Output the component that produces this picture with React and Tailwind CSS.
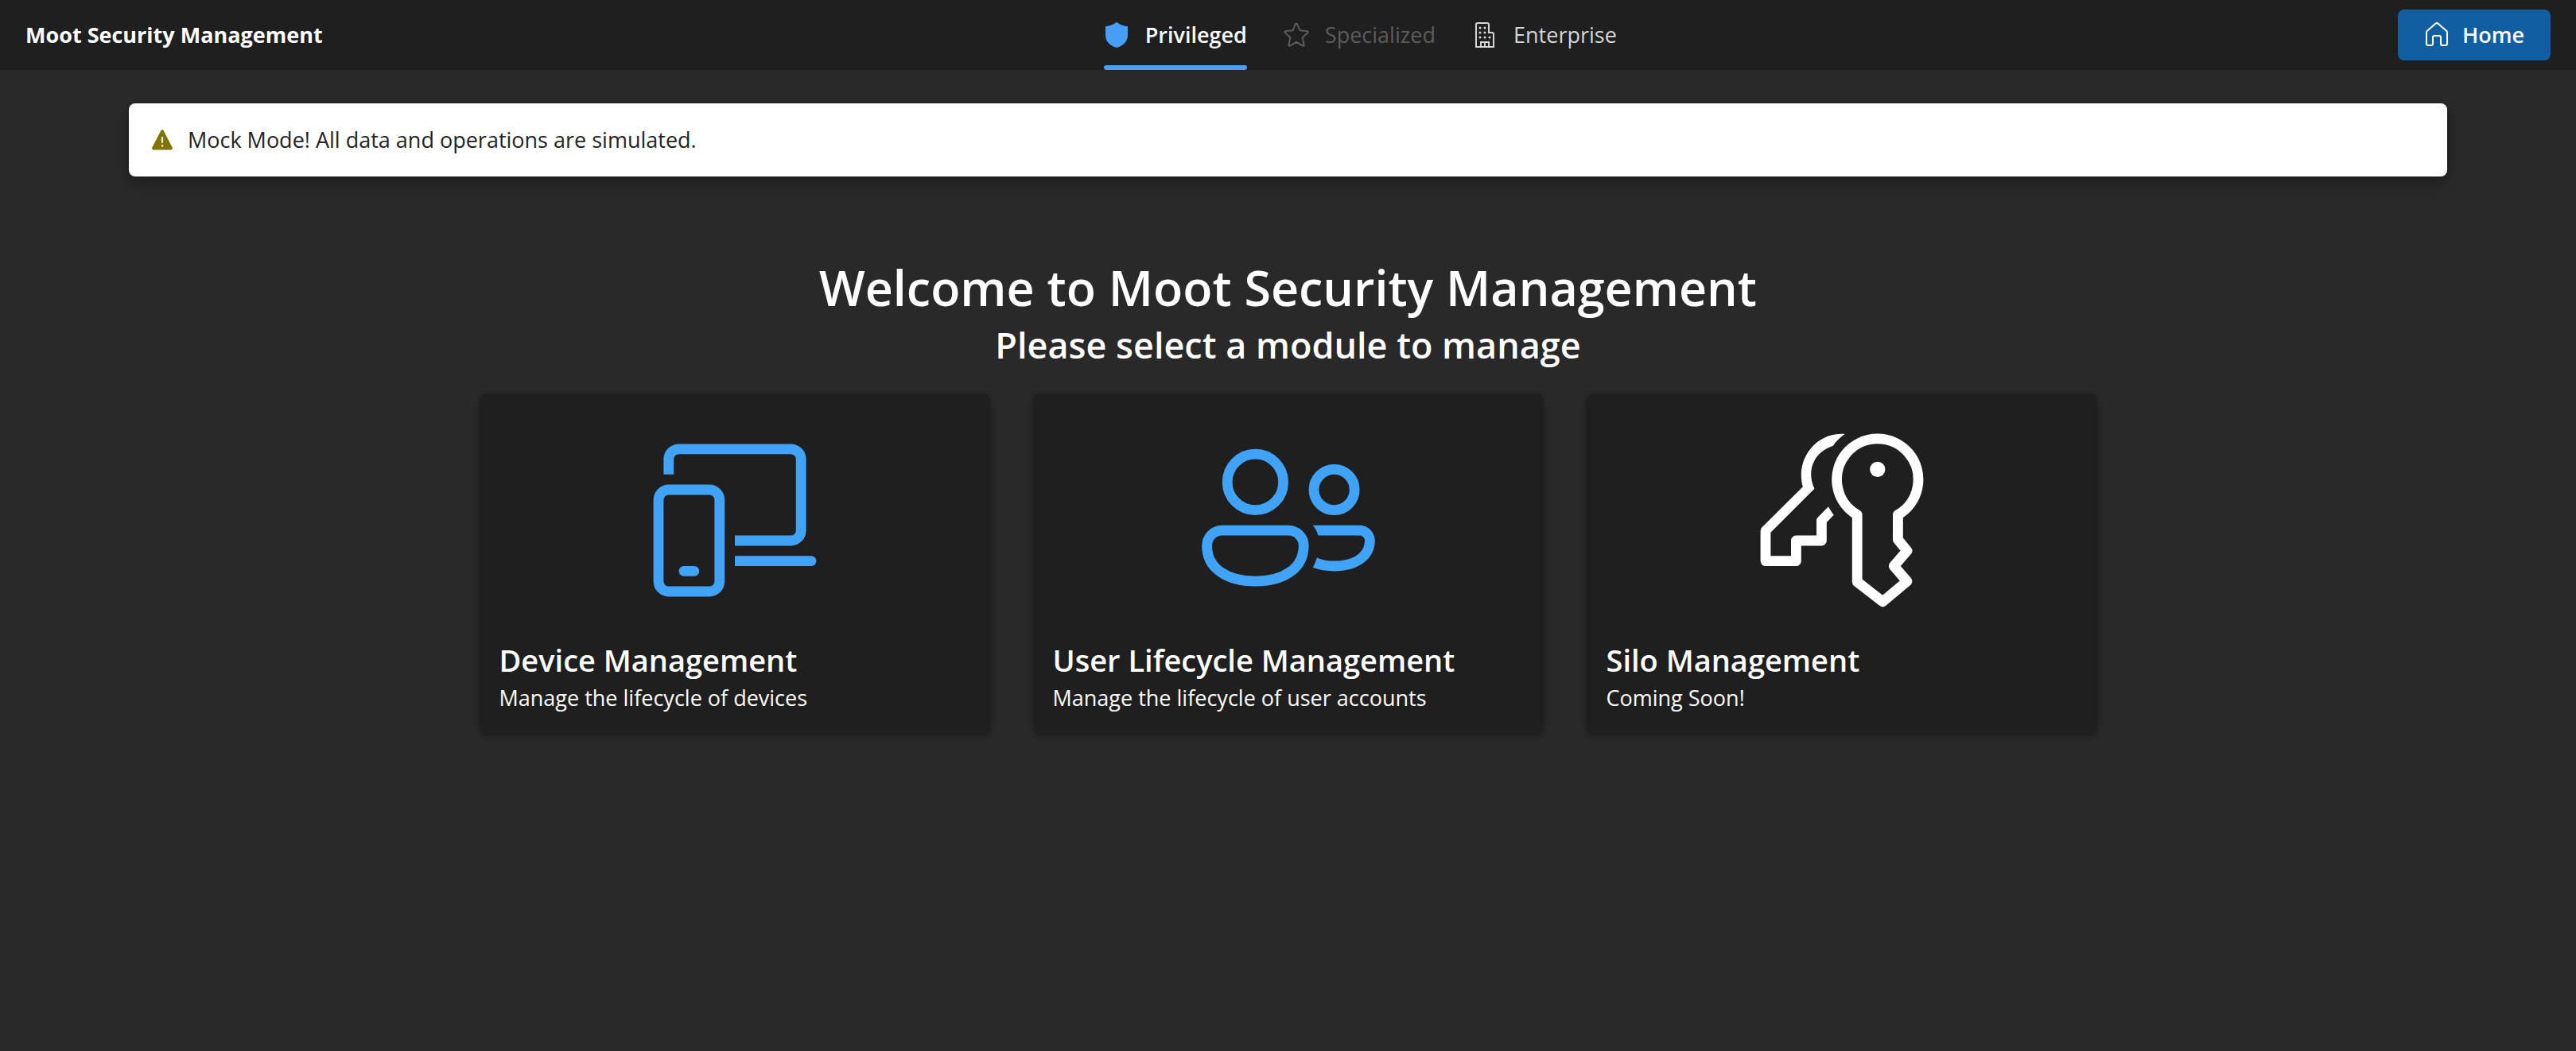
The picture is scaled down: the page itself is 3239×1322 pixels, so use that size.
function Icon({ box = "0 0 32 32", className, children }) {
  return (
    <svg viewBox={box} fill="none" stroke="currentColor" aria-hidden="true" className={className}>
      {children}
    </svg>
  );
}

function ShieldIcon() {
  return (
    <Icon className="size-8 shrink-0 text-[#479ef5]">
      <path
        d="M16 0c.5 0 .8.2 1.200.5C20.300 3 24 4.500 29 5c.7.100 1 .5 1 1v10c0 8-5 13-13.300 15.800a2 2 0 0 1-1.400 0C7 29 2 24 2 16V6c0-.5.300-.9 1-1 5-.5 8.700-2 11.800-4.500.400-.3.700-.5 1.200-.5z"
        fill="currentColor"
        stroke="none"
      />
    </Icon>
  );
}

function StarIcon() {
  return (
    <Icon className="size-8 shrink-0">
      <path
        d="M15.100 2.200a1 1 0 0 1 1.800 0l3.700 8.100 9.300 1a.9.900 0 0 1 .5 1.600l-6.700 6.300 1.900 9.500a1 1 0 0 1-1.500 1L16 25l-8.100 4.700a1 1 0 0 1-1.500-1l1.900-9.500-6.700-6.300a.9.900 0 0 1 .5-1.600l9.300-1z"
        strokeWidth="2"
      />
    </Icon>
  );
}

function BuildingIcon() {
  return (
    <Icon className="size-8 shrink-0">
      <path d="M5 31V3a2 2 0 0 1 2-2h12a2 2 0 0 1 2 2v10h4a2 2 0 0 1 2 2v16zM11 31v-6h10v6M16 25v6" strokeWidth="2" />
      <g fill="currentColor" stroke="none">
        {[[10, 7], [16, 7], [10, 13], [16, 13], [10, 19], [16, 19], [22, 19]].map(([x, y]) => (
          <circle key={`${x}-${y}`} cx={x} cy={y} r="1.5" />
        ))}
      </g>
    </Icon>
  );
}

function HomeIcon() {
  return (
    <Icon className="size-8 shrink-0">
      <path
        d="M14.700 1.500a2 2 0 0 1 2.600 0l11 9.500a2 2 0 0 1 .7 1.500V27a2 2 0 0 1-2 2h-4a2 2 0 0 1-2-2v-8a2 2 0 0 0-2-2h-6a2 2 0 0 0-2 2v8a2 2 0 0 1-2 2H5a2 2 0 0 1-2-2V12.500a2 2 0 0 1 .7-1.500z"
        strokeWidth="2"
      />
    </Icon>
  );
}

function WarningIcon() {
  return (
    <Icon className="size-8 shrink-0 text-[#817400]">
      <path
        d="M14.200 4.500a2 2 0 0 1 3.600 0l11 21.200A2 2 0 0 1 27 28.500H5a2 2 0 0 1-1.800-2.800z"
        fill="currentColor"
        stroke="none"
      />
      <path d="M16 13v6" stroke="#fff" strokeWidth="2" strokeLinecap="round" />
      <circle cx="16" cy="23.500" r="1.300" fill="#fff" stroke="none" />
    </Icon>
  );
}

function DevicesIcon() {
  return (
    <Icon box="0 0 20 20" className="size-64 text-[#41a3f6]">
      <path d="M3.500 6V4.500a1 1 0 0 1 1-1h11a1 1 0 0 1 1 1v7a1 1 0 0 1-1 1H10" />
      <path d="M10 14h7.500a.5.5 0 0 1 0 1H10z" fill="currentColor" stroke="none" />
      <rect x="2.500" y="7.500" width="6" height="10" rx="1" />
      <rect x="4.500" y="15" width="2" height="1" rx="0.500" fill="currentColor" stroke="none" />
    </Icon>
  );
}

function PeopleIcon() {
  return (
    <Icon box="0 0 20 20" className="size-64 text-[#41a3f6]">
      <circle cx="6.750" cy="6.750" r="2.750" />
      <circle cx="14.500" cy="7.500" r="2" />
      <path d="M3.500 11.500H10a1.500 1.500 0 0 1 1.500 1.500c0 2.250-2 3.500-4.750 3.500S2 15.250 2 13a1.500 1.500 0 0 1 1.500-1.500z" />
      <path
        d="M12.400 11H17a1.500 1.500 0 0 1 1.500 1.500c0 1.800-1.600 3-4 3-.8 0-1.500-.1-2.100-.36.170-.3.300-.620.400-.970.5.220 1.050.330 1.700.330 1.900 0 3-.8 3-2a.5.5 0 0 0-.5-.5h-4.070c-.1-.4-.280-.7-.530-1z"
        fill="currentColor"
        stroke="none"
      />
    </Icon>
  );
}

function KeysIcon() {
  return (
    <Icon box="0 0 20 20" className="size-64 text-white">
      <path
        d="M11.500 9.960a4 4 0 1 1 4 0v2.440l.9 1.100-1.300 1.500 1.300 1.500-2.400 2-2.500-1.950z"
        strokeLinejoin="round"
      />
      <circle cx="13.500" cy="5.500" r="0.750" fill="currentColor" stroke="none" />
      <path
        d="M10.300 2.020C7.900 1.800 6 3.800 6 6.070c0 .4.050.770.160 1.130l-4.010 4a.5.5 0 0 0-.15.350v2.950a.5.5 0 0 0 .5.500h3a.5.5 0 0 0 .5-.5V13h2a.5.5 0 0 0 .5-.5v-1.800l.7-.720c-.2-.260-.370-.530-.530-.820L7.650 10.200a.5.5 0 0 0-.15.350V12h-2a.5.5 0 0 0-.5.500V14H3v-2.300l4.300-4.300C7.100 7 6.970 6.500 6.970 6c0-1.300.8-2.400 2.160-2.820.320-.460.720-.850 1.170-1.160z"
        fill="currentColor"
        stroke="none"
      />
    </Icon>
  );
}

const tabs = [
  { label: "Privileged", icon: ShieldIcon, selected: true },
  { label: "Specialized", icon: StarIcon, disabled: true },
  { label: "Enterprise", icon: BuildingIcon },
];

const modules = [
  { title: "Device Management", text: "Manage the lifecycle of devices", icon: DevicesIcon },
  { title: "User Lifecycle Management", text: "Manage the lifecycle of user accounts", icon: PeopleIcon },
  { title: "Silo Management", text: "Coming Soon!", icon: KeysIcon },
];

function Tab({ label, icon: TabIcon, selected, disabled }) {
  const tone = selected ? "font-semibold text-white" : disabled ? "text-[#5c5c5c]" : "text-[#d6d6d6]";
  return (
    <button
      type="button"
      role="tab"
      aria-selected={!!selected}
      disabled={disabled}
      className={`relative flex h-full items-center gap-5 text-[27px] leading-10 ${tone}`}
    >
      <TabIcon />
      {label}
      {selected && <span className="absolute inset-x-0 bottom-0 h-1.5 rounded-full bg-[#479ef5]" />}
    </button>
  );
}

function ModuleCard({ title, text, icon: ModuleIcon }) {
  return (
    <button
      type="button"
      className="flex flex-col rounded-lg bg-[#1f1f1f] p-6 text-left shadow-[0_0_4px_rgba(0,0,0,0.24),0_4px_8px_rgba(0,0,0,0.28)]"
    >
      <span className="flex w-full justify-center pb-[26px]">
        <ModuleIcon />
      </span>
      <span className="text-[38px] leading-14 font-semibold">{title}</span>
      <span className="text-[27px] leading-10">{text}</span>
    </button>
  );
}

export default function App() {
  return (
    <div className="min-h-screen bg-[#292929] font-['Open_Sans','Noto_Sans',sans-serif] text-white">
      <header className="flex h-22 items-center justify-between bg-[#1f1f1f] px-8">
        <span className="text-[27px] leading-10 font-bold">Moot Security Management</span>
        <div role="tablist" className="flex h-full gap-[46px]">
          {tabs.map((tab) => (
            <Tab key={tab.label} {...tab} />
          ))}
        </div>
        <button
          type="button"
          className="flex h-16 items-center gap-4 rounded-lg bg-[#115ea3] px-[33px] text-[27px] leading-10 font-semibold"
        >
          <HomeIcon />
          Home
        </button>
      </header>
      <main className="pt-[42px]">
        <div
          role="alert"
          className="mx-[5%] flex h-23 items-center gap-4 rounded-lg bg-white px-[26px] text-[27px] leading-10 text-[#242424] shadow-[0_0_4px_rgba(0,0,0,0.24),0_8px_16px_rgba(0,0,0,0.28)]"
        >
          <WarningIcon />
          Mock Mode! All data and operations are simulated.
        </div>
        <h1 className="mt-25 text-center text-[61px] leading-20 font-semibold">
          Welcome to Moot Security Management
        </h1>
        <h2 className="text-center text-[45px] leading-16 font-semibold">Please select a module to manage</h2>
        <div className="mx-auto mt-[30px] grid max-w-[2032px] grid-cols-3 gap-14">
          {modules.map((module) => (
            <ModuleCard key={module.title} {...module} />
          ))}
        </div>
      </main>
    </div>
  );
}
